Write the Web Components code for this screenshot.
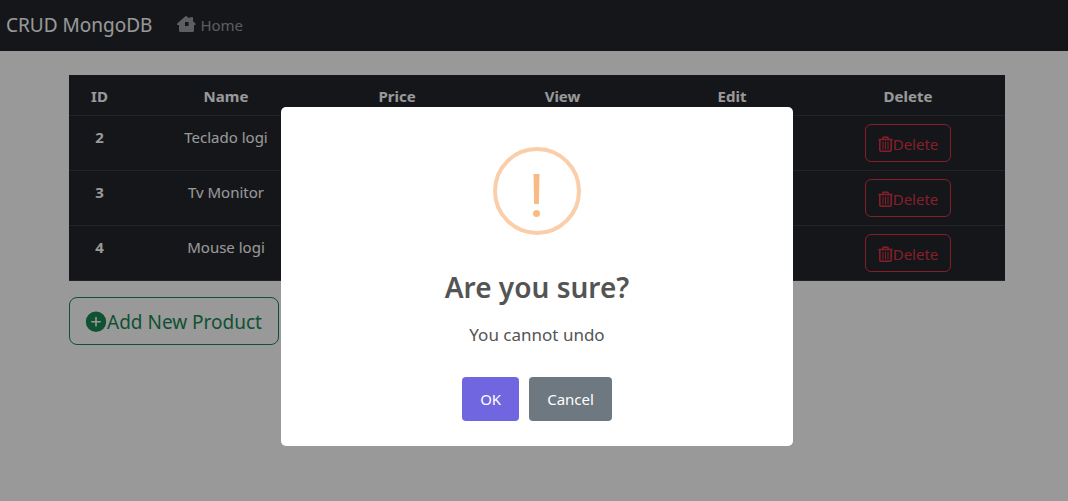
<!DOCTYPE html>
<html lang="en">
<head>
<meta charset="utf-8">
<title>CRUD MongoDB</title>
<style>
  body { margin: 0; background: #fff; color: #212529; font: 15px/24px "Noto Sans", "Open Sans", sans-serif; --dark: #24262b; }
</style>
</head>
<body>
<crud-app></crud-app>

<template id="nav-tpl">
  <style>
    :host { display: block; background: var(--dark); }
    nav { display: flex; align-items: center; gap: 25px; padding: 10px 6px 11px; }
    a { text-decoration: none; }
    .brand { color: #fff; font-size: 19px; line-height: 30px; }
    .link { display: flex; align-items: center; gap: 4px; color: rgba(255,255,255,.55); }
    svg { width: 19px; height: 18px; fill: currentColor; }
  </style>
  <nav>
    <a class="brand" href="#">CRUD MongoDB</a>
    <a class="link" href="#">
      <svg viewBox="0 0 19 18" aria-hidden="true"><path fill-rule="evenodd" d="M7.800.700a1.600 1.600 0 0 1 2.400 0L12.500 2.500V1.200H16v4L18.400 7.600c.500.700.100 1.400-.7 1.400H17V14.500a1.500 1.500 0 0 1-1.500 1.500h-12A1.500 1.500 0 0 1 2 14.500V9H.8C0 9-.3 8.300.2 7.600ZM8 6v4h3.500V6Z"/></svg>Home</a>
  </nav>
</template>

<template id="button-tpl">
  <style>
    :host { display: inline-block; vertical-align: top; --tone: #dc3545; }
    :host([tone="success"]) { --tone: #198754; }
    button { display: flex; align-items: center; margin: 0; padding: 7px 12px 5px; border: 1px solid var(--tone); border-radius: 6px; background: none; color: var(--tone); font: inherit; cursor: pointer; }
    :host([size="lg"]) button { padding: 9px 16px 7px 15px; border-radius: 8px; font-size: 19px; line-height: 30px; }
  </style>
  <button type="button"><slot name="icon"></slot><slot></slot></button>
</template>

<template id="table-tpl">
  <style>
    :host { display: block; }
    table { width: 100%; table-layout: fixed; border-collapse: separate; border-spacing: 0; background: var(--dark); color: #fff; text-align: center; }
    th, td { padding: 9px 8px 7px; border-bottom: 1px solid #373b3e; vertical-align: top; }
    td.action { padding: 8px; }
    th { font-weight: 700; }
    .trash { width: 15px; height: 17px; }
  </style>
  <table>
    <colgroup><col width="61"><col width="192"><col width="150"><col width="181"><col width="158"><col width="194"></colgroup>
    <thead><tr><th scope="col">ID</th><th scope="col">Name</th><th scope="col">Price</th><th scope="col">View</th><th scope="col">Edit</th><th scope="col">Delete</th></tr></thead>
    <tbody></tbody>
  </table>
</template>

<template id="row-tpl">
  <tr>
    <th scope="row"></th><td class="name"></td><td></td><td></td><td></td>
    <td class="action"><outline-button><svg slot="icon" class="trash" viewBox="0 0 15 17" fill="none" stroke="currentColor" aria-hidden="true"><path stroke-width="1.600" d="M.5 3.500h14M1.800 3.500V14a1.300 1.300 0 0 0 1.300 1.300h8.800A1.300 1.300 0 0 0 13.200 14V3.500M4.500 3 5.300 1.200h4.400l.8 1.800"/><path d="M5 5.500v8M7.500 5.500v8M10 5.500v8"/></svg>Delete</outline-button></td>
  </tr>
</template>

<template id="dialog-tpl">
  <style>
    :host { position: fixed; inset: 0; display: flex; align-items: center; justify-content: center; padding: 52px 0 0 6px; box-sizing: border-box; background: rgba(0,0,0,.4); }
    section { display: flex; flex-direction: column; align-items: center; width: 512px; max-width: 100%; box-sizing: border-box; padding: 40px 20px 25px; border-radius: 5px; background: #fff; color: #545454; text-align: center; }
    svg { width: 88px; height: 88px; }
    h2 { margin: 32px 0 0; font-size: 28px; line-height: 40px; font-weight: 600; }
    p { margin: 16px 0 0; font-size: 17px; line-height: 24px; }
    .actions { display: flex; gap: 10px; margin-top: 30px; }
    button { margin: 0; padding: 10px 18px; border: 0; border-radius: 4px; background: #7066e0; color: #fff; font: inherit; cursor: pointer; }
    .cancel { background: #6e7881; }
  </style>
  <section role="dialog" aria-modal="true" aria-labelledby="title">
    <svg viewBox="0 0 88 88" aria-hidden="true"><circle cx="44" cy="44" r="42" fill="none" stroke="#facea8" stroke-width="4"/><path d="M40.500 27h6l-.6 30h-4.800Z" fill="#f8bb86"/><circle cx="43.500" cy="66.500" r="3.500" fill="#f8bb86"/></svg>
    <h2 id="title"><slot name="title"></slot></h2>
    <p><slot></slot></p>
    <div class="actions"><button type="button">OK</button><button type="button" class="cancel">Cancel</button></div>
  </section>
</template>

<template id="app-tpl">
  <style>
    :host { display: block; }
    main { max-width: 936px; margin: 0 auto; padding: 24px 12px 0 18px; }
    outline-button { margin-top: 16px; }
    .plus { width: 22px; height: 22px; }
  </style>
  <nav-bar></nav-bar>
  <main>
    <product-table></product-table>
    <outline-button tone="success" size="lg"><svg slot="icon" class="plus" viewBox="0 0 22 22" aria-hidden="true"><path fill="currentColor" fill-rule="evenodd" d="M11 .5a10.200 10.200 0 1 0 0 20.400 10.200 10.200 0 0 0 0-20.400ZM10.200 6h1.600v3.900h3.900v1.600h-3.900v3.900h-1.600v-3.900H6.300V9.900h3.900Z"/></svg>Add New Product</outline-button>
  </main>
  <confirm-dialog><span slot="title">Are you sure?</span>You cannot undo</confirm-dialog>
</template>

<script>
  const clone = id => document.getElementById(id).content.cloneNode(true);
  const define = (name, tpl) => customElements.define(name, class extends HTMLElement {
    constructor() {
      super();
      this.attachShadow({ mode: "open" }).append(clone(tpl));
    }
  });
  define("nav-bar", "nav-tpl");
  define("outline-button", "button-tpl");
  define("confirm-dialog", "dialog-tpl");

  const products = [[2, "Teclado logi"], [3, "Tv Monitor"], [4, "Mouse logi"]];
  customElements.define("product-table", class extends HTMLElement {
    constructor() {
      super();
      const root = this.attachShadow({ mode: "open" });
      root.append(clone("table-tpl"));
      for (const [id, name] of products) {
        const row = clone("row-tpl");
        row.querySelector("th").textContent = id;
        row.querySelector(".name").textContent = name;
        root.querySelector("tbody").append(row);
      }
    }
  });
  define("crud-app", "app-tpl");
</script>
</body>
</html>
